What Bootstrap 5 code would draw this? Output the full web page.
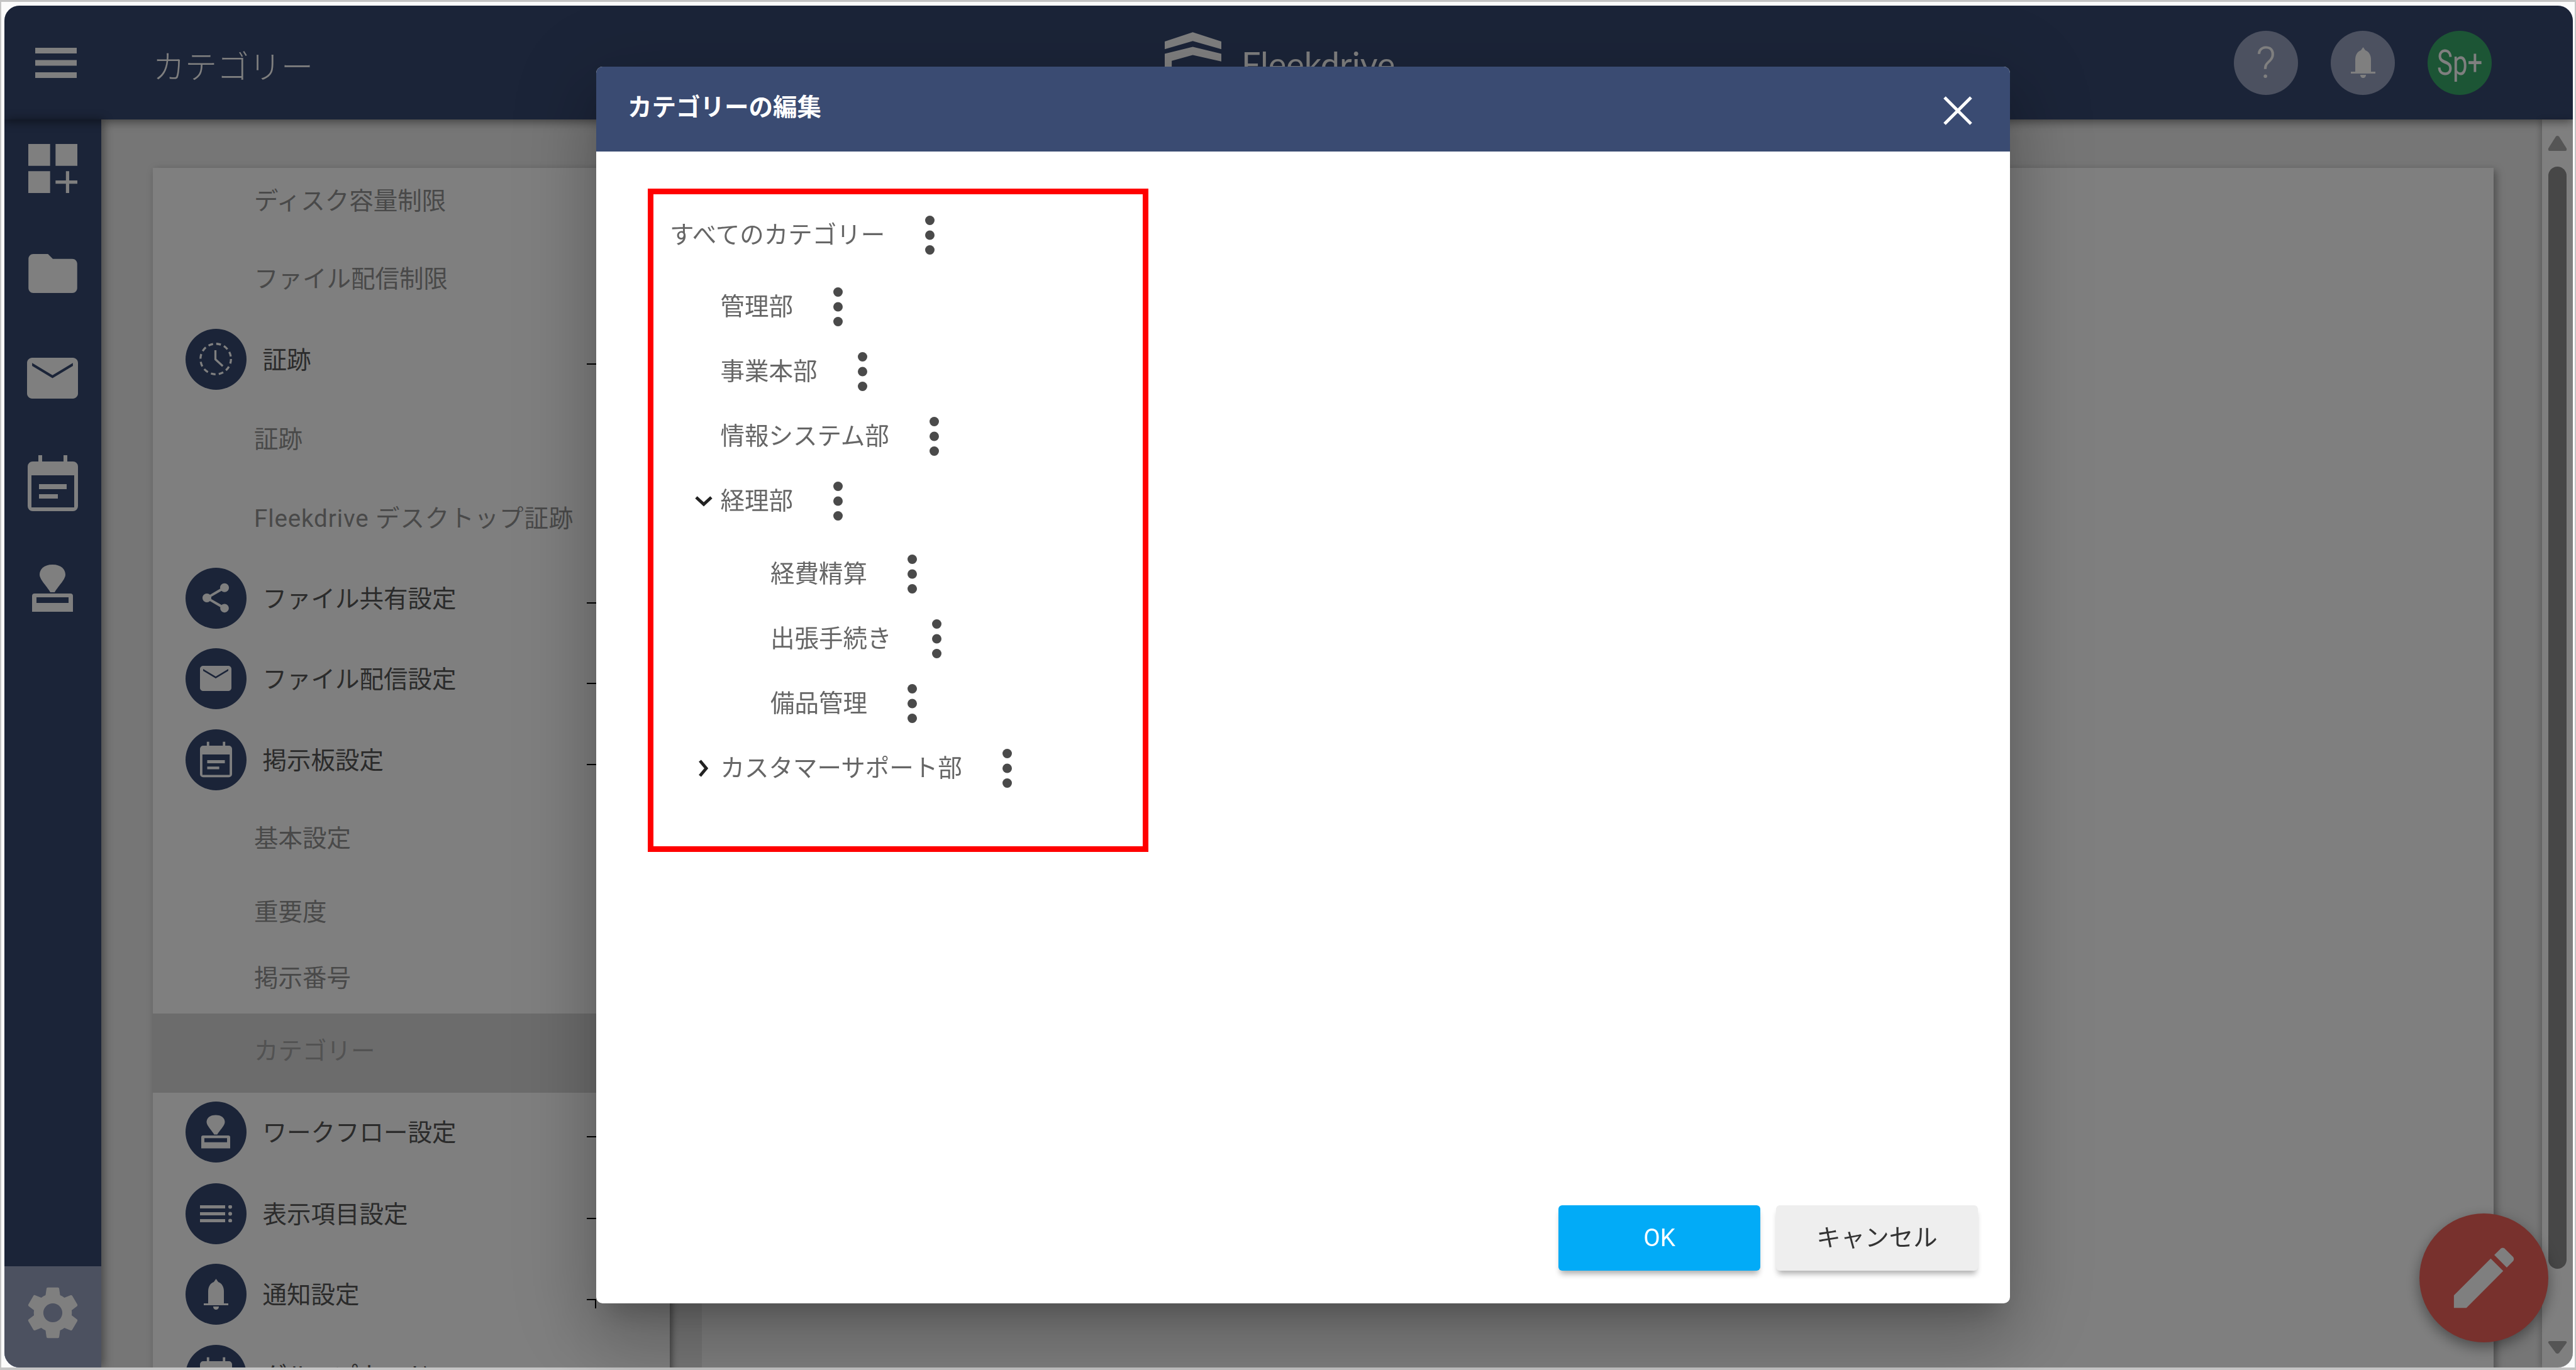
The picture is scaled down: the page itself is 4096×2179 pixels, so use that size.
<!DOCTYPE html>
<html lang="ja">
<head>
<meta charset="utf-8">
<title>カテゴリーの編集</title>
<link rel="stylesheet" href="https://cdn.jsdelivr.net/npm/bootstrap@5.3.0/dist/css/bootstrap.min.css">
<style>
html,body{height:100%;margin:0;overflow:hidden;background:#fbfbfb}
body{font-family:Roboto,"Noto Sans CJK JP",sans-serif;font-size:38.5px;font-weight:400}
.fd-frame{height:2179px;border:solid #c4c4c4;border-width:3px 2px 4px 2px;padding:6px 3px 0 4.5px}
.fd-app{position:relative;height:100%;overflow:hidden;border-radius:24px;background:#364870}
.fd-head{height:181px;position:relative;z-index:2;box-shadow:0 4px 14px rgba(0,0,0,.45)}
.fd-head-left{width:1845.5px;padding-left:49.5px}
.fd-title{margin-left:121px;margin-top:15px;font-size:51px;font-weight:300;color:#fff;line-height:1}
.fd-logo{margin-top:42px;align-self:flex-start}
.fd-logo-text{font-family:Lato,sans-serif;font-size:54px;color:#fff;line-height:1;margin:24px 0 0 32px;font-weight:400}
.fd-tools{padding-right:129px;gap:52px}
.fd-tool{width:102px;height:102px;border-radius:50%;background:#98a2c0;color:#fff}
.fd-tool-q{font-size:70px;font-weight:300;line-height:1}
.fd-tool-sp{background:#38aa6a;font-size:56px;font-weight:400;line-height:1}
.fd-tool-sp span{display:block;transform:scaleX(.75)}
.fd-side{width:154.5px;position:relative;z-index:1;box-shadow:4px 0 14px rgba(0,0,0,.4);gap:12px}
.fd-side-slot{height:155px}
.fd-side-gear{height:161px;background:#98a2c0;padding-bottom:13px;margin-top:auto}
.fd-side svg{fill:#fff}
.fd-main{background:#ececec;min-width:0}
.fd-content{padding:77px 0 0 82px;min-width:0}
.fd-panel{width:3722px;height:1950px;background:#fff;box-shadow:4px 4px 12px rgba(0,0,0,.35);position:relative}
.fd-nav{width:822px;overflow:hidden;position:relative}
.fd-nav-list{margin-top:-9px}
.fd-row{padding-right:117px}
.fd-row-child{padding-left:161px;color:#939393}
.fd-row-parent{padding-left:51.5px;color:#565656}
.fd-spaced{letter-spacing:.9px}
.fd-label-p{margin-left:26px;padding-top:4px}
.fd-ico{width:97px;height:97px;border-radius:50%;background:#364870;flex:none}
.fd-ico svg{fill:#fff}
.fd-tick{margin-left:auto;margin-top:16px;width:15px;height:2px;background:#000;flex:none}
.fd-tick-end{height:15px;margin-top:30px;background:none;border-top:2px solid #000;border-right:2px solid #000}
.fd-sel{background:#d8d8d8;color:#a4a4a4;padding-bottom:6px}
.fd-pb6{padding-bottom:6px}
.rh100{height:100px}.rh106{height:106px}.rh110{height:110px}.rh120{height:120px}.rh124{height:124px}.rh126{height:126px}.rh128{height:128px}.rh130{height:130px}.rh136{height:136px}.rh138{height:138px}
.fd-nav-arrow{position:absolute;left:781px;bottom:4px}
.fd-strip{width:51px;background:#ececec;box-shadow:inset 10px 0 10px -6px rgba(0,0,0,.4)}
.fd-scroll{width:49px;background:#fff;box-shadow:-3px 0 8px rgba(0,0,0,.2);padding-top:26px;position:relative}
.fd-thumb{width:29px;height:1753px;background:#8e8e8e;border-radius:15px;margin:25px 0 115px}
.fd-fab{position:absolute;left:3840.5px;top:1921px;width:205px;height:205px;border-radius:50%;background:#f0625a;box-shadow:0 8px 22px rgba(0,0,0,.4);z-index:3}
.fd-app>.modal-backdrop{position:absolute;inset:0;width:100%;height:100%;z-index:10}
.modal.fd-modal{z-index:20;overflow:hidden}
.fd-modal .modal-dialog{max-width:none;width:2248px;margin:106px 0 0 948px}
.fd-modal .modal-content{height:1967px;border:0;border-radius:10px;box-shadow:0 31px 42px -19px rgba(0,0,0,.2),0 67px 106px 8px rgba(0,0,0,.14),0 25px 128px 22px rgba(0,0,0,.12)}
.fd-modal .modal-header{height:135px;padding:0 60px 0 50px;background:#3a4b72;border:0;border-radius:10px 10px 0 0}
.fd-modal .modal-title{font-size:38.5px;font-weight:700;color:#fff;line-height:1;margin-top:-4px}
.fd-close{background:none;border:0;padding:0;line-height:0;margin-top:5px}
.fd-modal .modal-body{padding:59px 0 0 82px;flex:1 1 auto}
.fd-tree{width:796px;height:1055px;border:9px solid #f00;padding-top:13px;color:#666}
.fd-node{height:103px}
.fd-lv0{padding-left:26px}
.fd-lv1{padding-left:62.5px}
.fd-lv2{padding-left:186px}
.fd-lv-first{margin-top:11px}
.fd-lv-group{margin-top:13px}
.fd-slot{width:44px;flex:none;padding-left:3px}
.fd-dots{margin-left:64px;flex:none;fill:#4a4a4a}
.fd-modal .modal-footer{border:0;padding:0 51px 52px 0;gap:25px;flex-wrap:nowrap}
.fd-btn{width:321px;height:104px;margin:0;border:0;border-radius:6px;font-size:38.5px;font-weight:400;line-height:1;box-shadow:0 8px 10px -3px rgba(0,0,0,.32)}
.fd-btn-ok{background:#02abf7;color:#fff}
.fd-btn-no{background:#eee;color:#333}
</style>
</head>
<body>
<svg width="0" height="0" class="d-none" aria-hidden="true">
  <symbol id="i-cal" viewBox="0 0 80 89"><path fill-rule="evenodd" d="M17 0h6v10h34V0h6v10h9a8 8 0 0 1 8 8v63a8 8 0 0 1-8 8H8a8 8 0 0 1-8-8V18a8 8 0 0 1 8-8h9zM6 32v51h68V32zM18 46h44v8H18zm0 16h30v7H18z"/></symbol>
  <symbol id="i-stamp" viewBox="0 0 65 75"><path d="M32.500 0C47 0 53 8 53 16c0 8-13 20-17 28h-7c-4-8-17-20-17-28C12 8 18 0 32.500 0z"/><path fill-rule="evenodd" d="M4 46h57q4 0 4 4v25H0V50q0-4 4-4zm3 6v9h51v-9z"/></symbol>
  <symbol id="i-bell" viewBox="0 0 39 49"><path d="M19.500 0L23 5c6 2 9 8 9 15v19h7v3H0v-3h7V20c0-7 3-13 9-15z"/><path d="M15 44h9c0 3-2 5-4.500 5S15 47 15 44z"/></symbol>
  <symbol id="i-mail" viewBox="2 4 20 16"><path d="M20 4H4c-1.100 0-1.990.9-1.990 2L2 18c0 1.100.9 2 2 2h16c1.100 0 2-.9 2-2V6c0-1.100-.9-2-2-2zm0 3.200l-8 4.800-8-4.800V6l8 4.800L20 6z"/></symbol>
  <symbol id="i-dots" viewBox="0 0 15 62"><circle cx="7.500" cy="7.500" r="7.500"/><circle cx="7.500" cy="31" r="7.500"/><circle cx="7.500" cy="54.500" r="7.500"/></symbol>
</svg>
<div class="fd-frame">
  <div class="fd-app d-flex flex-column">
    <header class="fd-head d-flex align-items-center flex-shrink-0">
      <div class="fd-head-left d-flex align-items-center">
        <svg width="66" height="48" viewBox="0 0 66 48" fill="#fff"><rect width="66" height="9"/><rect y="19.500" width="66" height="9"/><rect y="39" width="66" height="9"/></svg>
        <div class="fd-title">カテゴリー</div>
      </div>
      <div class="fd-logo d-flex">
        <svg width="90" height="84" viewBox="0 0 97 90" fill="#fff"><path d="M0 16L48 0l49 16v13L48 15 0 29z"/><path d="M0 37l48-12 49 12v13L48 39 12 49v41H0z"/></svg>
        <div class="fd-logo-text">Fleekdrive</div>
      </div>
      <div class="fd-tools d-flex align-items-center ms-auto">
        <div class="fd-tool fd-tool-q d-flex align-items-center justify-content-center">?</div>
        <div class="fd-tool d-flex align-items-center justify-content-center"><svg width="39" height="49" fill="#fff"><use href="#i-bell"/></svg></div>
        <div class="fd-tool fd-tool-sp d-flex align-items-center justify-content-center"><span>Sp+</span></div>
      </div>
    </header>
    <div class="d-flex flex-grow-1" style="min-height:0">
      <aside class="fd-side d-flex flex-column flex-shrink-0">
        <div class="fd-side-slot d-flex align-items-center justify-content-center"><svg width="78" height="78" viewBox="3 3 18 18"><path d="M3 3h8v8H3zm10 0h8v8h-8zM3 13h8v8H3zm15 0h-1.200v3.400H13v1.200h3.800V21H18v-3.400h3v-1.200h-3z"/></svg></div>
        <div class="fd-side-slot d-flex align-items-center justify-content-center"><svg width="78" height="62" viewBox="2 4 20 16"><path d="M10 4H4c-1.100 0-1.990.9-1.990 2L2 18c0 1.100.9 2 2 2h16c1.100 0 2-.9 2-2V8c0-1.100-.9-2-2-2h-8l-2-2z"/></svg></div>
        <div class="fd-side-slot d-flex align-items-center justify-content-center"><svg width="81" height="65"><use href="#i-mail"/></svg></div>
        <div class="fd-side-slot d-flex align-items-center justify-content-center"><svg width="80" height="89"><use href="#i-cal"/></svg></div>
        <div class="fd-side-slot d-flex align-items-center justify-content-center"><svg width="65" height="75"><use href="#i-stamp"/></svg></div>
        <div class="fd-side-gear d-flex align-items-center justify-content-center"><svg width="84" height="84" viewBox="2.600 2 18.800 20"><path d="M19.140 12.940c.04-.3.060-.61.060-.94 0-.32-.02-.64-.07-.94l2.030-1.580c.18-.14.230-.41.120-.61l-1.920-3.320c-.12-.22-.37-.29-.59-.22l-2.390.96c-.5-.38-1.030-.7-1.620-.94l-.36-2.540c-.04-.24-.24-.41-.48-.41h-3.840c-.24 0-.43.170-.47.410l-.36 2.540c-.59.240-1.130.570-1.620.94l-2.390-.96c-.22-.08-.47 0-.59.220L2.740 8.870c-.12.210-.08.470.12.610l2.030 1.580c-.05.3-.09.630-.09.940s.02.640.07.940l-2.030 1.580c-.18.140-.23.410-.12.610l1.920 3.320c.12.220.37.290.59.220l2.390-.96c.5.380 1.030.7 1.620.94l.36 2.540c.05.240.24.410.48.410h3.840c.24 0 .44-.17.470-.41l.36-2.540c.59-.24 1.130-.56 1.620-.94l2.390.96c.22.080.47 0 .59-.22l1.920-3.320c.12-.22.070-.47-.12-.61l-2.010-1.580zM12 15.600c-1.980 0-3.600-1.620-3.600-3.600s1.620-3.600 3.600-3.600 3.600 1.620 3.600 3.600-1.620 3.600-3.600 3.600z"/></svg></div>
      </aside>
      <main class="fd-main d-flex flex-grow-1">
        <div class="fd-content flex-grow-1">
          <div class="fd-panel d-flex">
            <nav class="fd-nav flex-shrink-0">
              <div class="fd-nav-list">
                <div class="fd-row fd-row-child rh124 d-flex align-items-center">ディスク容量制限</div>
                <div class="fd-row fd-row-child rh124 d-flex align-items-center">ファイル配信制限</div>
                <div class="fd-row fd-row-parent rh130 d-flex align-items-center">
                  <span class="fd-ico d-flex align-items-center justify-content-center"><svg width="56" height="56" viewBox="0 0 60 60"><circle cx="30" cy="30" r="26" fill="none" stroke="#fff" stroke-width="3.500" stroke-dasharray="8 5.630"/><path d="M29.500 15v15.500L42 42" fill="none" stroke="#fff" stroke-width="3.500"/></svg></span>
                  <span class="fd-label-p">証跡</span><span class="fd-tick"></span>
                </div>
                <div class="fd-row fd-row-child rh126 d-flex align-items-center">証跡</div>
                <div class="fd-row fd-row-child fd-spaced rh126 d-flex align-items-center">Fleekdrive デスクトップ証跡</div>
                <div class="fd-row fd-row-parent rh126 d-flex align-items-center">
                  <span class="fd-ico d-flex align-items-center justify-content-center"><svg width="56" height="56" viewBox="0 0 24 24"><path d="M18 16.080c-.76 0-1.440.3-1.960.77L8.910 12.700c.05-.23.090-.46.090-.7s-.04-.47-.09-.7l7.050-4.110c.54.5 1.250.81 2.040.81 1.660 0 3-1.340 3-3s-1.340-3-3-3-3 1.340-3 3c0 .24.040.47.090.7L8.040 9.810C7.500 9.310 6.790 9 6 9c-1.660 0-3 1.340-3 3s1.340 3 3 3c.79 0 1.500-.31 2.040-.81l7.120 4.160c-.05.21-.08.43-.08.65 0 1.610 1.310 2.920 2.920 2.920 1.610 0 2.920-1.310 2.920-2.920s-1.310-2.920-2.920-2.920z"/></svg></span>
                  <span class="fd-label-p">ファイル共有設定</span><span class="fd-tick"></span>
                </div>
                <div class="fd-row fd-row-parent rh130 d-flex align-items-center">
                  <span class="fd-ico d-flex align-items-center justify-content-center"><svg width="50" height="40"><use href="#i-mail"/></svg></span>
                  <span class="fd-label-p">ファイル配信設定</span><span class="fd-tick"></span>
                </div>
                <div class="fd-row fd-row-parent rh128 d-flex align-items-center">
                  <span class="fd-ico d-flex align-items-center justify-content-center"><svg width="51" height="58"><use href="#i-cal"/></svg></span>
                  <span class="fd-label-p">掲示板設定</span><span class="fd-tick"></span>
                </div>
                <div class="fd-row fd-row-child rh124 d-flex align-items-center">基本設定</div>
                <div class="fd-row fd-row-child rh110 d-flex align-items-center">重要度</div>
                <div class="fd-row fd-row-child fd-pb6 rh106 d-flex align-items-center">掲示番号</div>
                <div class="fd-row fd-row-child fd-sel rh126 d-flex align-items-center">カテゴリー</div>
                <div class="fd-row fd-row-parent rh124 d-flex align-items-center">
                  <span class="fd-ico d-flex align-items-center justify-content-center"><svg width="46" height="54"><use href="#i-stamp"/></svg></span>
                  <span class="fd-label-p">ワークフロー設定</span><span class="fd-tick"></span>
                </div>
                <div class="fd-row fd-row-parent rh136 d-flex align-items-center">
                  <span class="fd-ico d-flex align-items-center justify-content-center"><svg width="51" height="27" viewBox="0 0 51 27"><path d="M0 0h40v5H0zM0 11h40v5H0zM0 22h40v5H0z"/><circle cx="48" cy="2.500" r="3"/><circle cx="48" cy="13.500" r="3"/><circle cx="48" cy="24.500" r="3"/></svg></span>
                  <span class="fd-label-p">表示項目設定</span><span class="fd-tick"></span>
                </div>
                <div class="fd-row fd-row-parent rh120 d-flex align-items-center">
                  <span class="fd-ico d-flex align-items-center justify-content-center"><svg width="39" height="49"><use href="#i-bell"/></svg></span>
                  <span class="fd-label-p">通知設定</span><span class="fd-tick fd-tick-end"></span>
                </div>
                <div class="fd-row fd-row-parent rh138 d-flex align-items-center">
                  <span class="fd-ico d-flex align-items-center justify-content-center"><svg width="51" height="58"><use href="#i-cal"/></svg></span>
                  <span class="fd-label-p">グループカード</span><span class="fd-tick"></span>
                </div>
              </div>
              <svg class="fd-nav-arrow" width="31" height="22" viewBox="0 0 31 22" fill="#949494"><path d="M3 0h25q3 0 2 3L18 20q-2.500 2-5 0L1 3Q0 0 3 0z"/></svg>
            </nav>
            <div class="fd-strip flex-shrink-0"></div>
            <div class="flex-grow-1"></div>
          </div>
        </div>
        <div class="fd-scroll d-flex flex-column align-items-center flex-shrink-0">
          <svg width="31" height="24" viewBox="0 0 31 24" fill="#aaa"><path d="M13 1q2.500-2 5 0l12 19q1 4-2 4H3q-3 0-2-4z"/></svg>
          <div class="fd-thumb"></div>
          <svg width="31" height="21" viewBox="0 0 31 21" fill="#aaa"><path d="M3 0h25q3 0 2 3L18 19q-2.500 2-5 0L1 3Q0 0 3 0z"/></svg>
        </div>
      </main>
    </div>
    <div class="fd-fab d-flex align-items-center justify-content-center"><svg width="127" height="127" viewBox="0 0 24 24" fill="#fff"><path d="M3 17.250V21h3.750L17.810 9.940l-3.750-3.750L3 17.250zM20.710 7.040c.39-.39.39-1.020 0-1.410l-2.340-2.340c-.39-.39-1.020-.39-1.410 0l-1.830 1.830 3.750 3.750 1.830-1.830z"/></svg></div>
    <div class="modal-backdrop show"></div>
  </div>
</div>
<div class="modal fd-modal d-block" tabindex="-1">
  <div class="modal-dialog">
    <div class="modal-content">
      <div class="modal-header flex-shrink-0">
        <h5 class="modal-title">カテゴリーの編集</h5>
        <button type="button" class="fd-close ms-auto" aria-label="Close"><svg width="46" height="46" viewBox="0 0 46 46" stroke="#fff" stroke-width="5" fill="none"><path d="M2 2l42 42M44 2L2 44"/></svg></button>
      </div>
      <div class="modal-body">
        <div class="fd-tree">
          <div class="fd-node fd-lv0 d-flex align-items-center">すべてのカテゴリー<svg class="fd-dots" width="15" height="62"><use href="#i-dots"/></svg></div>
          <div class="fd-node fd-lv1 fd-lv-first d-flex align-items-center"><span class="fd-slot"></span>管理部<svg class="fd-dots" width="15" height="62"><use href="#i-dots"/></svg></div>
          <div class="fd-node fd-lv1 d-flex align-items-center"><span class="fd-slot"></span>事業本部<svg class="fd-dots" width="15" height="62"><use href="#i-dots"/></svg></div>
          <div class="fd-node fd-lv1 d-flex align-items-center"><span class="fd-slot"></span>情報システム部<svg class="fd-dots" width="15" height="62"><use href="#i-dots"/></svg></div>
          <div class="fd-node fd-lv1 d-flex align-items-center"><span class="fd-slot d-flex align-items-center"><svg width="28" height="18" viewBox="0 0 28 18" fill="none" stroke="#222" stroke-width="5"><path d="M2 3l12 11L26 3"/></svg></span>経理部<svg class="fd-dots" width="15" height="62"><use href="#i-dots"/></svg></div>
          <div class="fd-node fd-lv2 fd-lv-group d-flex align-items-center">経費精算<svg class="fd-dots" width="15" height="62"><use href="#i-dots"/></svg></div>
          <div class="fd-node fd-lv2 d-flex align-items-center">出張手続き<svg class="fd-dots" width="15" height="62"><use href="#i-dots"/></svg></div>
          <div class="fd-node fd-lv2 d-flex align-items-center">備品管理<svg class="fd-dots" width="15" height="62"><use href="#i-dots"/></svg></div>
          <div class="fd-node fd-lv1 d-flex align-items-center"><span class="fd-slot d-flex align-items-center ps-2"><svg width="16" height="28" viewBox="0 0 16 28" fill="none" stroke="#222" stroke-width="5"><path d="M3 2l10 12L3 26"/></svg></span>カスタマーサポート部<svg class="fd-dots" width="15" height="62"><use href="#i-dots"/></svg></div>
        </div>
      </div>
      <div class="modal-footer flex-shrink-0">
        <button type="button" class="btn fd-btn fd-btn-ok">OK</button>
        <button type="button" class="btn fd-btn fd-btn-no">キャンセル</button>
      </div>
    </div>
  </div>
</div>
<script src="https://cdn.jsdelivr.net/npm/bootstrap@5.3.0/dist/js/bootstrap.bundle.min.js"></script>
</body>
</html>
